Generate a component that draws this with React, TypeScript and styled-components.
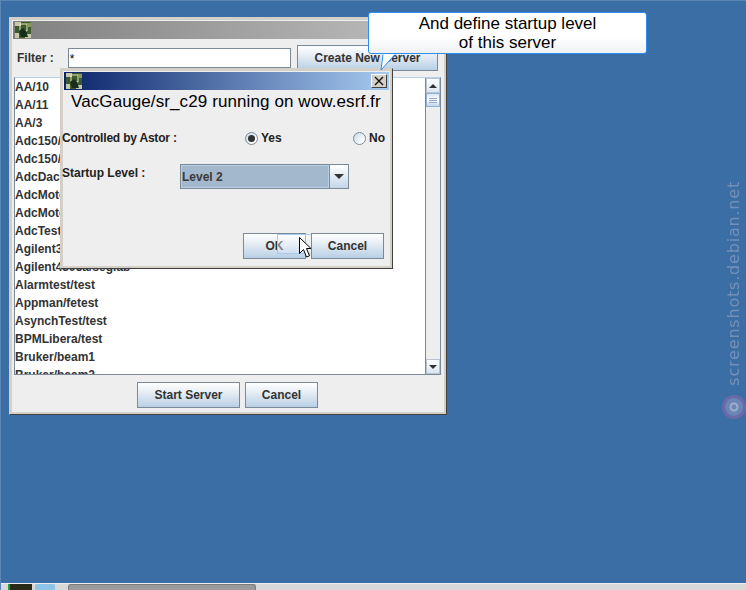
import React from 'react';
import styled, { createGlobalStyle } from 'styled-components';

const servers = [
  'AA/10', 'AA/11', 'AA/3', 'Adc150/test', 'Adc150/test2', 'AdcDac/test', 'AdcMotor/1', 'AdcMotor/2',
  'AdcTest/test', 'Agilent3/test', 'Agilent4395a/seglab', 'Alarmtest/test', 'Appman/fetest',
  'AsynchTest/test', 'BPMLibera/test', 'Bruker/beam1', 'Bruker/beam2',
];

const GlobalStyle = createGlobalStyle`
  html, body {
    margin: 0;
    padding: 0;
    background: #3b6ea5;
  }
  * {
    box-sizing: border-box;
  }
`;

const Desktop = styled.div`
  position: relative;
  width: 746px;
  height: 590px;
  overflow: hidden;
  background: #3b6ea5;
  border-top: 1px solid #5a86b5;
  border-left: 1px solid #5a86b5;
  font-family: "Liberation Sans", Arial, sans-serif;
  font-size: 12px;
  font-weight: 700;
  color: #333333;
`;

const Frame = styled.div<{ $x: number; $y: number; $w: number; $h: number }>`
  position: absolute;
  left: ${(p) => p.$x}px;
  top: ${(p) => p.$y}px;
  width: ${(p) => p.$w}px;
  height: ${(p) => p.$h}px;
  display: flex;
  flex-direction: column;
  padding: 3px;
  background: #eeeeee;
  border: 1px solid;
  border-color: #d4d0c8 #404040 #404040 #d4d0c8;
  box-shadow: inset -2px -2px 0 #d4d0c8, inset 2px 2px 0 #d4d0c8;
`;

const TitleBar = styled.div<{ $active?: boolean }>`
  flex: none;
  height: 18px;
  display: flex;
  align-items: center;
  justify-content: space-between;
  padding-right: 2px;
  background: ${(p) =>
    p.$active
      ? 'linear-gradient(90deg, #0a246a 0%, #a6caf0 100%)'
      : 'linear-gradient(90deg, #808080 0%, #c0c0c0 100%)'};
`;

const CloseButton = styled.div`
  width: 16px;
  height: 14px;
  display: flex;
  align-items: center;
  justify-content: center;
  background: #d4d0c8;
  border: 1px solid;
  border-color: #ffffff #404040 #404040 #ffffff;
`;

const ServerBody = styled.div`
  flex: 1;
  min-height: 0;
  display: flex;
  flex-direction: column;
  padding: 0 1px;
`;

const FilterRow = styled.div`
  flex: none;
  height: 38px;
  display: flex;
  align-items: center;
  padding: 0 4px 1px 3px;
`;

const FilterLabel = styled.span`
  width: 51px;
`;

const FilterInput = styled.div`
  width: 224px;
  height: 20px;
  padding: 3px 1px;
  background: #ffffff;
  border: 1px solid #7a8a99;
  font-weight: 400;
  line-height: 14px;
  color: #000000;
`;

const Button = styled.div<{ $w: number; $h?: number; $ml?: number }>`
  flex: none;
  width: ${(p) => p.$w}px;
  height: ${(p) => p.$h ?? 26}px;
  margin-left: ${(p) => p.$ml ?? 0}px;
  display: flex;
  align-items: center;
  justify-content: center;
  background: linear-gradient(180deg, #ffffff 0%, #e6edf4 40%, #b8cfe5 100%);
  border: 1px solid #7a8a99;
`;

const ListArea = styled.div`
  flex: none;
  height: 298px;
  display: flex;
  margin-right: 1px;
  border: 1px solid #7a8a99;
  border-top-color: #b8cfe5;
`;

const List = styled.div`
  flex: 1;
  overflow: hidden;
  background: #ffffff;
`;

const ListRow = styled.div`
  height: 18px;
  line-height: 18px;
  white-space: nowrap;
`;

const Scrollbar = styled.div`
  flex: none;
  width: 15px;
  display: flex;
  flex-direction: column;
  background: #eeeeee;
  border-left: 1px solid #7a8a99;
`;

const ScrollArrow = styled.div<{ $up?: boolean }>`
  flex: none;
  height: 15px;
  display: flex;
  align-items: center;
  justify-content: center;
  background: linear-gradient(180deg, #ffffff 0%, #dce6f0 100%);
  border: 1px solid #b8c4d0;
  &::after {
    content: '';
    border-left: 4px solid transparent;
    border-right: 4px solid transparent;
    ${(p) => (p.$up ? 'border-bottom: 4px solid #333333;' : 'border-top: 4px solid #333333;')}
  }
`;

const ScrollThumb = styled.div`
  flex: none;
  height: 14px;
  display: flex;
  flex-direction: column;
  align-items: center;
  justify-content: center;
  gap: 1px;
  background: linear-gradient(180deg, #dbe6f2 0%, #ffffff 50%, #c4d6e8 100%);
  border: 1px solid #8fb0d8;
`;

const ThumbLine = styled.span`
  width: 8px;
  height: 1px;
  background: #8fa8c4;
`;

const ScrollTrack = styled.div`
  flex: 1;
`;

const ButtonBar = styled.div<{ $pad?: string; $end?: boolean }>`
  flex: 1;
  display: flex;
  align-items: center;
  justify-content: ${(p) => (p.$end ? 'flex-end' : 'center')};
  padding: ${(p) => p.$pad ?? '0'};
`;

const DialogBody = styled.div`
  flex: 1;
  min-height: 0;
  display: flex;
  flex-direction: column;
`;

const Heading = styled.div`
  flex: none;
  height: 24px;
  padding-left: 7px;
  font-size: 17px;
  font-weight: 400;
  letter-spacing: 0.1px;
  line-height: 24px;
  color: #000000;
  white-space: nowrap;
`;

const AstorRow = styled.div`
  flex: none;
  height: 24px;
  margin: 12px 0 0 -2px;
  display: flex;
  align-items: center;
  color: #222222;
`;

const FieldLabel = styled.span`
  width: 183px;
  flex: none;
  letter-spacing: -0.2px;
`;

const RadioItem = styled.span<{ $w: number }>`
  width: ${(p) => p.$w}px;
  flex: none;
  display: flex;
  align-items: center;
  gap: 3px;
`;

const Radio = styled.span<{ $on?: boolean }>`
  width: 13px;
  height: 13px;
  flex: none;
  display: flex;
  align-items: center;
  justify-content: center;
  border-radius: 50%;
  border: 1px solid #7a8a99;
  background: linear-gradient(135deg, #c8d8e8 0%, #ffffff 80%);
  &::after {
    content: '';
    display: ${(p) => (p.$on ? 'block' : 'none')};
    width: 7px;
    height: 7px;
    border-radius: 50%;
    background: #333333;
  }
`;

const LevelRow = styled.div`
  flex: none;
  height: 24px;
  margin: 14px 0 0 -2px;
  display: flex;
  align-items: center;
  color: #222222;
`;

const LevelLabel = styled.span`
  width: 118px;
  flex: none;
  padding-bottom: 7px;
`;

const Combo = styled.div`
  width: 169px;
  height: 25px;
  display: flex;
  border: 1px solid #7a8a99;
`;

const ComboValue = styled.div`
  flex: 1;
  line-height: 23px;
  color: #3a3a3a;
  background: #a3b8cc;
  border: 1px solid #b8cfe5;
`;

const ComboArrow = styled.div`
  width: 19px;
  display: flex;
  align-items: center;
  justify-content: center;
  background: linear-gradient(180deg, #ffffff 0%, #c4d6e8 100%);
  border-left: 1px solid #7a8a99;
  &::after {
    content: '';
    border-left: 5px solid transparent;
    border-right: 5px solid transparent;
    border-top: 5px solid #333333;
  }
`;

const Callout = styled.div`
  position: absolute;
  left: 367px;
  top: 11px;
  width: 279px;
  height: 42px;
  padding-top: 1px;
  background: linear-gradient(180deg, #ffffff 0%, #ffffff 60%, #eef0f2 100%);
  border: 1px solid #2a8ff0;
  border-radius: 3px;
  text-align: center;
  font-size: 17px;
  font-weight: 400;
  line-height: 19px;
  color: #000000;
`;

const CalloutTail = styled.svg`
  position: absolute;
  left: 379px;
  top: 52px;
`;

const FocusGhost = styled.div`
  position: absolute;
  left: 276px;
  top: 233px;
  width: 34px;
  height: 20px;
  background: linear-gradient(180deg, rgba(255, 255, 255, 0.4) 0%, rgba(220, 232, 244, 0.4) 100%);
  border: 1px solid #a6caf0;
  border-right-color: transparent;
`;

const Cursor = styled.svg`
  position: absolute;
  left: 297px;
  top: 235px;
`;

const Watermark = styled.div`
  position: absolute;
  left: 723px;
  top: 180px;
  writing-mode: vertical-rl;
  transform: rotate(180deg);
  font-family: "DejaVu Sans", sans-serif;
  font-size: 16px;
  font-weight: 400;
  letter-spacing: 0.8px;
  line-height: 20px;
  color: #7490b8;
  white-space: nowrap;
  filter: blur(0.5px);
`;

const WatermarkLogo = styled.svg`
  position: absolute;
  left: 720px;
  top: 393px;
`;

const Panel = styled.div`
  position: absolute;
  left: -1px;
  right: 0;
  bottom: 0;
  height: 7px;
  display: flex;
  align-items: flex-start;
  background: #d9d9d9;
  border-top: 1px solid #eeeeee;
`;

const PanelMeter = styled.div`
  width: 24px;
  height: 6px;
  margin-left: 8px;
  background: #2a2a18;
  border-left: 2px solid #1f9c3a;
`;

const PanelIcon = styled.div`
  width: 20px;
  height: 6px;
  margin-left: 3px;
  background: #8ec4e8;
  border-radius: 2px 2px 0 0;
`;

const PanelTask = styled.div`
  width: 188px;
  height: 6px;
  margin-left: 13px;
  background: #9a9a9a;
  border: 1px solid #7a7a7a;
  border-bottom: 0;
  border-radius: 3px 3px 0 0;
`;

const AppIcon = () => (
  <svg width="16" height="16" viewBox="0 0 16 16" style={{ flex: 'none', marginLeft: 2 }}>
    <rect width="16" height="16" fill="#3c5a2c" />
    <path d="M0 0h6v4H0zM10 12h6v4h-6zM0 11h4v5H0z" fill="#c8c8a8" />
    <path d="M5 2h7v7H5z" fill="none" stroke="#e8e8c8" />
    <path d="M4 9l4-3 3 3 2 6H6z" fill="#14301c" />
    <path d="M12 1h4v4h-4z" fill="#8a9a5a" />
  </svg>
);

export default function App() {
  return (
    <Desktop>
      <GlobalStyle />
      <Frame $x={8} $y={16} $w={438} $h={398}>
        <TitleBar>
          <AppIcon />
        </TitleBar>
        <ServerBody>
          <FilterRow>
            <FilterLabel>Filter :</FilterLabel>
            <FilterInput>*</FilterInput>
            <Button $w={141} $ml={6}>Create New Server</Button>
          </FilterRow>
          <ListArea>
            <List>
              {servers.map((name) => (
                <ListRow key={name}>{name}</ListRow>
              ))}
            </List>
            <Scrollbar>
              <ScrollArrow $up />
              <ScrollThumb>
                <ThumbLine />
                <ThumbLine />
                <ThumbLine />
              </ScrollThumb>
              <ScrollTrack />
              <ScrollArrow />
            </Scrollbar>
          </ListArea>
          <ButtonBar $pad="3px 0 0 0">
            <Button $w={103} $ml={-1}>Start Server</Button>
            <Button $w={73} $ml={5}>Cancel</Button>
          </ButtonBar>
        </ServerBody>
      </Frame>

      <Frame $x={59} $y={67} $w={333} $h={201}>
        <TitleBar $active>
          <AppIcon />
          <CloseButton>
            <svg width="10" height="10" viewBox="0 0 10 10">
              <path d="M1 1l8 8M9 1l-8 8" stroke="#111111" strokeWidth="1.4" />
            </svg>
          </CloseButton>
        </TitleBar>
        <DialogBody>
          <Heading>VacGauge/sr_c29 running on wow.esrf.fr</Heading>
          <AstorRow>
            <FieldLabel>Controlled by Astor :</FieldLabel>
            <RadioItem $w={108}>
              <Radio $on />
              Yes
            </RadioItem>
            <RadioItem $w={34}>
              <Radio />
              No
            </RadioItem>
          </AstorRow>
          <LevelRow>
            <LevelLabel>Startup Level :</LevelLabel>
            <Combo>
              <ComboValue>Level 2</ComboValue>
              <ComboArrow />
            </Combo>
          </LevelRow>
          <ButtonBar $end $pad="39px 5px 0 0">
            <Button $w={63}>OK</Button>
            <Button $w={73} $ml={5}>Cancel</Button>
          </ButtonBar>
        </DialogBody>
      </Frame>

      <FocusGhost />

      <Callout>
        And define startup level
        <br />
        of this server
      </Callout>
      <CalloutTail width="20" height="18" viewBox="0 0 20 18">
        <path d="M3 1L1 17 15 1" fill="#ffffff" />
        <path d="M3 1.5L1 17 15 1.5" fill="none" stroke="#2a8ff0" />
      </CalloutTail>

      <Cursor width="13" height="23" viewBox="0 0 13 23">
        <path d="M1.5 1.5v16l4-4 3 7.5 3-1.2-3-7.3h4.5z" fill="#ffffff" stroke="#000000" />
      </Cursor>

      <Watermark>screenshots.debian.net</Watermark>
      <WatermarkLogo width="26" height="26" viewBox="0 0 26 26">
        <circle cx="13" cy="13" r="10.5" fill="#6a86b8" stroke="#6a6aa8" strokeWidth="3" />
        <circle cx="13" cy="13" r="3.5" fill="none" stroke="#a0aec8" strokeWidth="2" />
      </WatermarkLogo>

      <Panel>
        <PanelMeter />
        <PanelIcon />
        <PanelTask />
      </Panel>
    </Desktop>
  );
}
